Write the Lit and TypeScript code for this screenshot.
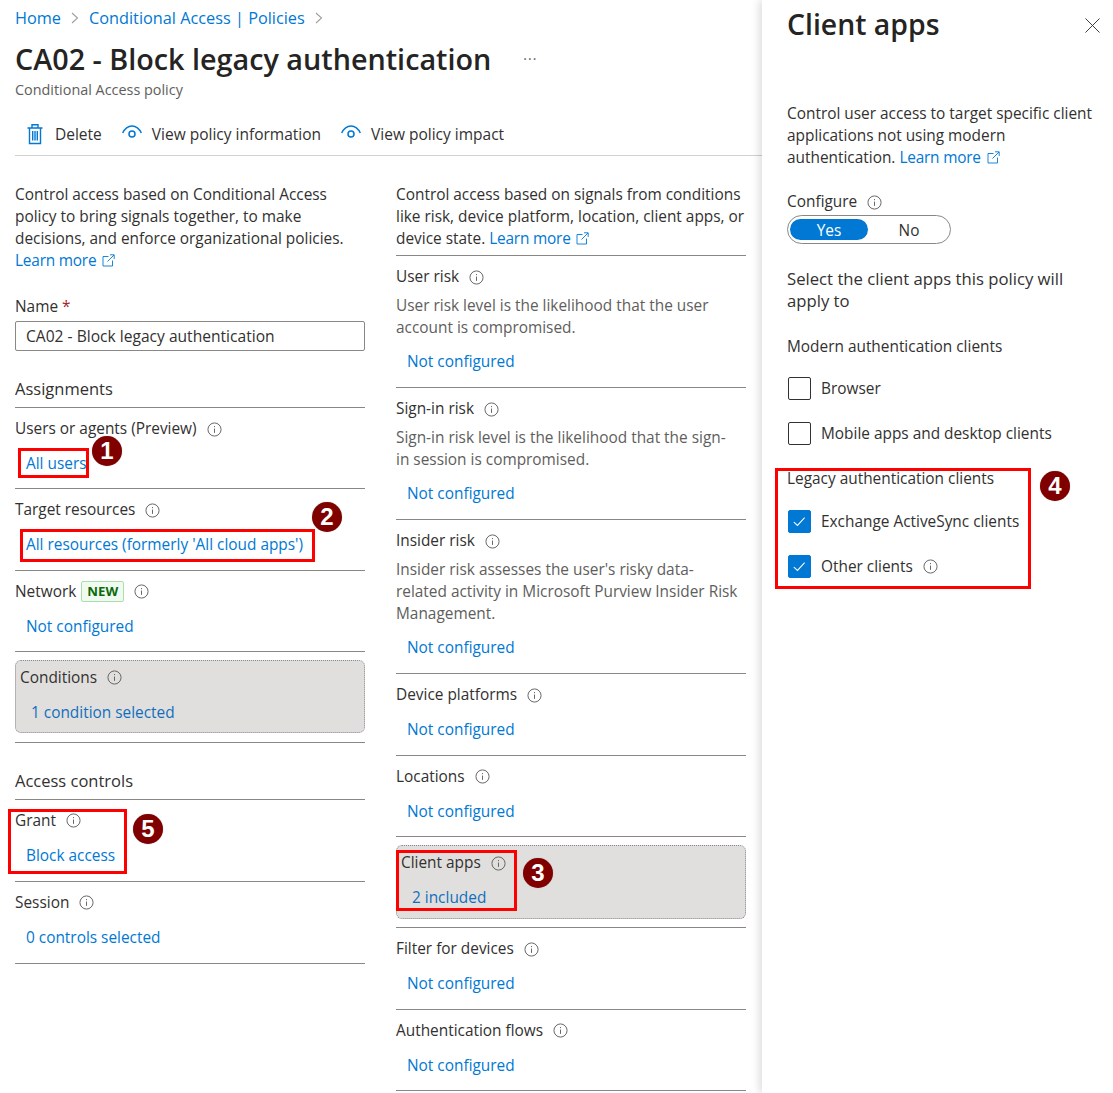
import { LitElement, html, css, svg } from "lit";
import { customElement } from "lit/decorators.js";

const info = html`<svg class="info" viewBox="0 0 16 16"><circle cx="8" cy="8" r="7" fill="none" stroke="#605e5c" stroke-width="1"/><path d="M8 7v4.600M8 4.300v1.200" stroke="#605e5c" stroke-width="1" fill="none"/></svg>`;
const ext = html`<svg class="ext" viewBox="0 0 13 13"><path d="M6.500 2.500H1v9.500h9.500V6.500M5.500 7.500 12 1M8 .8h4.200V5" fill="none" stroke="#0078d4" stroke-width=".9"/></svg>`;
const eye = html`<svg class="tool-ico eye" viewBox="0 0 20 14"><path d="M.7 8C5 -1.500 15 -1.500 19.300 8" fill="none" stroke="#0078d4" stroke-width="1.500"/><circle cx="10" cy="9" r="3" fill="none" stroke="#0078d4" stroke-width="1.500"/></svg>`;
const chev = html`<svg class="chev" viewBox="0 0 8 12"><path d="M1 1l5.500 5L1 11" fill="none" stroke="#a19f9d" stroke-width="1.100"/></svg>`;
const tick = svg`<path d="M5.300 12.200l4 3.600 7.800-8.500" fill="none" stroke="#fff" stroke-width="1.100"/>`;

interface Sec { label: string; value: string; desc?: string[]; sel?: boolean; }

const left1: Sec[] = [
  { label: "Users or agents (Preview)", value: "All users" },
  { label: "Target resources", value: "All resources (formerly 'All cloud apps')" },
  { label: "Network", value: "Not configured" },
  { label: "Conditions", value: "1 condition selected", sel: true },
];
const left2: Sec[] = [
  { label: "Grant", value: "Block access" },
  { label: "Session", value: "0 controls selected" },
];
const right: Sec[] = [
  { label: "User risk", value: "Not configured", desc: ["User risk level is the likelihood that the user", "account is compromised."] },
  { label: "Sign-in risk", value: "Not configured", desc: ["Sign-in risk level is the likelihood that the sign-", "in session is compromised."] },
  { label: "Insider risk", value: "Not configured", desc: ["Insider risk assesses the user's risky data-", "related activity in Microsoft Purview Insider Risk", "Management."] },
  { label: "Device platforms", value: "Not configured" },
  { label: "Locations", value: "Not configured" },
  { label: "Client apps", value: "2 included", sel: true },
  { label: "Filter for devices", value: "Not configured" },
  { label: "Authentication flows", value: "Not configured" },
];

const boxes = [
  [18, 448, 71, 30], [20, 529, 295, 33], [396, 850, 121, 61], [775, 468, 256, 121], [8, 809, 119, 65],
];
const badges = [
  [107, 451, "1"], [327, 517, "2"], [538, 873, "3"], [1055, 486, "4"], [148, 829, "5"],
];

@customElement("app-root")
export class AppRoot extends LitElement {
  static styles = css`
    :host { display: block; width: 1113px; height: 1093px; overflow: hidden; position: relative; background: #fff;
      font-family: "Open Sans", "Liberation Sans", sans-serif; font-size: 15.4px; line-height: 22px; color: #323130; }
    .root { display: flex; height: 1093px; }
    .main { width: 762px; flex: none; padding-left: 15px; box-sizing: border-box; overflow: hidden; }
    a { color: #0078d4; text-decoration: none; }
    .crumbs { display: flex; align-items: center; height: 22px; margin-top: 7px; font-size: 16.3px; }
    .chev { width: 8px; height: 12px; margin: 0 10px 0 10px; }
    .title-row { display: flex; align-items: center; height: 44px; margin-top: 8px; }
    h1 { margin: 0; font-size: 28.75px; font-weight: 600; color: #252423; line-height: 44px; white-space: nowrap; }
    .more { margin-left: 32px; font-size: 14px; color: #605e5c; letter-spacing: 1px; }
    .sub { font-size: 14.4px; color: #605e5c; height: 22px; line-height: 22px; margin-top: -2px; }
    .toolbar { display: flex; align-items: center; height: 42px; margin-top: 12px; border-bottom: 1px solid #d2d0ce; }
    .tool { display: flex; align-items: center; white-space: nowrap; font-size: 15.5px; }
    .tool-ico { flex: none; }
    .trash { width: 16px; height: 22px; margin: 0 12px 0 12px; }
    .eye { width: 20px; height: 14px; margin: -4px 10px 0 20px; }
    .cols { display: flex; gap: 31px; margin-top: 27px; }
    .col { width: 350px; flex: none; }
    .para { margin: 1px 0 0; white-space: nowrap; }
    .para a, .pdesc a { letter-spacing: -.2px; }
    .ext { width: 13px; height: 13px; margin-left: 2px; vertical-align: -1px; }
    .rule { border-top: 1px solid #8a8886; margin-top: 5px; }
    .name-label { margin-top: 24px; }
    .req { color: #a4262c; }
    .input { height: 30px; box-sizing: border-box; margin-top: 3px; border: 1px solid #8a8886; border-radius: 2px; padding: 0 10px; line-height: 29px; white-space: nowrap; font-size: 15.6px; }
    h2 { margin: 27px 0 0; font-size: 16.5px; font-weight: 400; line-height: 22px; height: 22px; border-bottom: 1px solid #8a8886; padding-bottom: 7px; }
    .sec { padding-top: 10px; height: 70.25px; border-bottom: 1px solid #8a8886; }
    .sec.mid { height: 70.5px; }
    .sec.wide { height: 71px; }
    .sec.tall2 { height: 121px; }
    .sec.tall3 { height: 143px; }
    .label { display: flex; align-items: center; height: 22px; white-space: nowrap; }
    .info { width: 15px; height: 15px; margin-left: 10px; flex: none; }
    .desc { color: #605e5c; margin-top: 7px; white-space: nowrap; }
    .val { display: block; padding-left: 11px; margin-top: 13px; white-space: nowrap; font-size: 15.4px; }
    .desc + .val { margin-top: 12px; }
    .new { margin-left: 5px; border: 1px solid #a9e0a9; background: #f1faf1; color: #0b6a0b; border-radius: 2px; font-weight: 700; font-size: 13.2px; height: 21px; line-height: 19px; padding: 0 5px; box-sizing: border-box; }
    .selwrap { padding: 8px 0 8.5px; border-bottom: 1px solid #8a8886; }
    .selbox { height: 73.5px; box-sizing: border-box; background: #e1dfdd; border: 1px dotted #8a8886; border-radius: 6px; padding: 6px 4px 0; }
    .selbox .val { color: #106ebe; }
    .panel { flex: 1; box-shadow: -3px 0 8px rgba(0,0,0,.13); padding: 0 0 0 25px; position: relative; background: #fff; }
    .ptop { display: flex; justify-content: space-between; height: 50px; }
    .ptitle { font-size: 28.4px; font-weight: 600; color: #252423; line-height: 48px; }
    .close { width: 15px; height: 15px; margin: 18px 13px 0 0; }
    .pdesc { margin: 52px 0 0; padding-top: 1px; white-space: nowrap; }
    .cfg { margin-top: 22px; }
    .toggle { display: flex; width: 164px; height: 29px; box-sizing: border-box; border: 1px solid #8a8886; border-radius: 15px; padding: 3px 2px; margin-top: 2px; }
    .toggle span { width: 78px; text-align: center; line-height: 23px; height: 21px; }
    .toggle span + span { padding-left: 2px; }
    .toggle .on { background: #0078d4; color: #fff; border-radius: 11px; }
    .select { margin-top: 24px; font-size: 16.7px; white-space: nowrap; }
    .head { margin-top: 24px; margin-bottom: -1px; }
    .chk { display: flex; align-items: center; height: 23px; white-space: nowrap; margin-top: 22px; padding-left: 1px; }
    .chk.first { margin-top: 20px; }
    .box { width: 23px; height: 23px; box-sizing: border-box; border: 1px solid #323130; border-radius: 2px; margin-right: 10px; flex: none; }
    .box.on { background: #0078d4; border-color: #0078d4; }
    .box svg { display: block; width: 21px; height: 21px; }
    .head2 { margin-top: 23px; }
    .mark { position: absolute; border: 3px solid #f00; box-sizing: border-box; pointer-events: none; }
    .badge { position: absolute; width: 30px; height: 30px; border-radius: 50%; background: #800000; color: #fff; font: 700 24px/30px "Liberation Sans", sans-serif; text-align: center; box-shadow: 0 0 1px #999; }
  `;

  sec(s: Sec, size = "") {
    const inner = html`<div class="label">${s.label}${s.label === "Network" ? html`<span class="new">NEW</span>` : ""}${info}</div>
      ${s.desc ? html`<div class="desc">${s.desc.map((d) => html`${d}<br />`)}</div>` : ""}
      <a class="val">${s.value}</a>`;
    if (s.sel) return html`<div class="selwrap"><div class="selbox">${inner}</div></div>`;
    const n = s.desc?.length ?? 0;
    return html`<div class="sec ${n === 2 ? "tall2" : n === 3 ? "tall3" : size}">${inner}</div>`;
  }

  render() {
    return html`<div class="root">
        <div class="main">
          <div class="crumbs"><a>Home</a>${chev}<a>Conditional Access | Policies</a>${chev}</div>
          <div class="title-row"><h1>CA02 - Block legacy authentication</h1><span class="more">···</span></div>
          <div class="sub">Conditional Access policy</div>
          <div class="toolbar">
            <div class="tool"><svg class="tool-ico trash" viewBox="0 0 16 22"><path d="M.5 5h15M5 5V1.700h6V5M2.500 5v15.500h11V5M5.700 8v9.500M8 8v9.500M10.300 8v9.500" fill="none" stroke="#0078d4" stroke-width="1.400"/></svg>Delete</div>
            <div class="tool">${eye}View policy information</div>
            <div class="tool">${eye}View policy impact</div>
          </div>
          <div class="cols">
            <div class="col">
              <p class="para">Control access based on Conditional Access<br />policy to bring signals together, to make<br />decisions, and enforce organizational policies.<br /><a>Learn more ${ext}</a></p>
              <div class="name-label">Name <span class="req">*</span></div>
              <div class="input">CA02 - Block legacy authentication</div>
              <h2>Assignments</h2>
              ${left1.map((s) => this.sec(s))}
              <h2>Access controls</h2>
              ${left2.map((s) => this.sec(s, "wide"))}
            </div>
            <div class="col">
              <p class="para">Control access based on signals from conditions<br />like risk, device platform, location, client apps, or<br />device state. <a>Learn more ${ext}</a></p>
              <div class="rule"></div>
              ${right.map((s) => this.sec(s, "mid"))}
            </div>
          </div>
        </div>
        <aside class="panel">
          <div class="ptop"><div class="ptitle">Client apps</div>
            <svg class="close" viewBox="0 0 16 16"><path d="M.5.500l15 15M15.500.500l-15 15" stroke="#323130" stroke-width="1" fill="none"/></svg></div>
          <p class="pdesc">Control user access to target specific client<br />applications not using modern<br />authentication. <a>Learn more ${ext}</a></p>
          <div class="label cfg">Configure${info}</div>
          <div class="toggle"><span class="on">Yes</span><span>No</span></div>
          <div class="select">Select the client apps this policy will<br />apply to</div>
          <div class="head">Modern authentication clients</div>
          <div class="chk first"><div class="box"></div>Browser</div>
          <div class="chk"><div class="box"></div>Mobile apps and desktop clients</div>
          <div class="head2">Legacy authentication clients</div>
          <div class="chk first"><div class="box on"><svg viewBox="0 0 23 23">${tick}</svg></div>Exchange ActiveSync clients</div>
          <div class="chk"><div class="box on"><svg viewBox="0 0 23 23">${tick}</svg></div>Other clients${info}</div>
        </aside>
      </div>
      ${boxes.map((b) => html`<div class="mark" style="left:${b[0]}px;top:${b[1]}px;width:${b[2]}px;height:${b[3]}px"></div>`)}
      ${badges.map((b) => html`<div class="badge" style="left:${(b[0] as number) - 15}px;top:${(b[1] as number) - 15}px">${b[2]}</div>`)}`;
  }
}
